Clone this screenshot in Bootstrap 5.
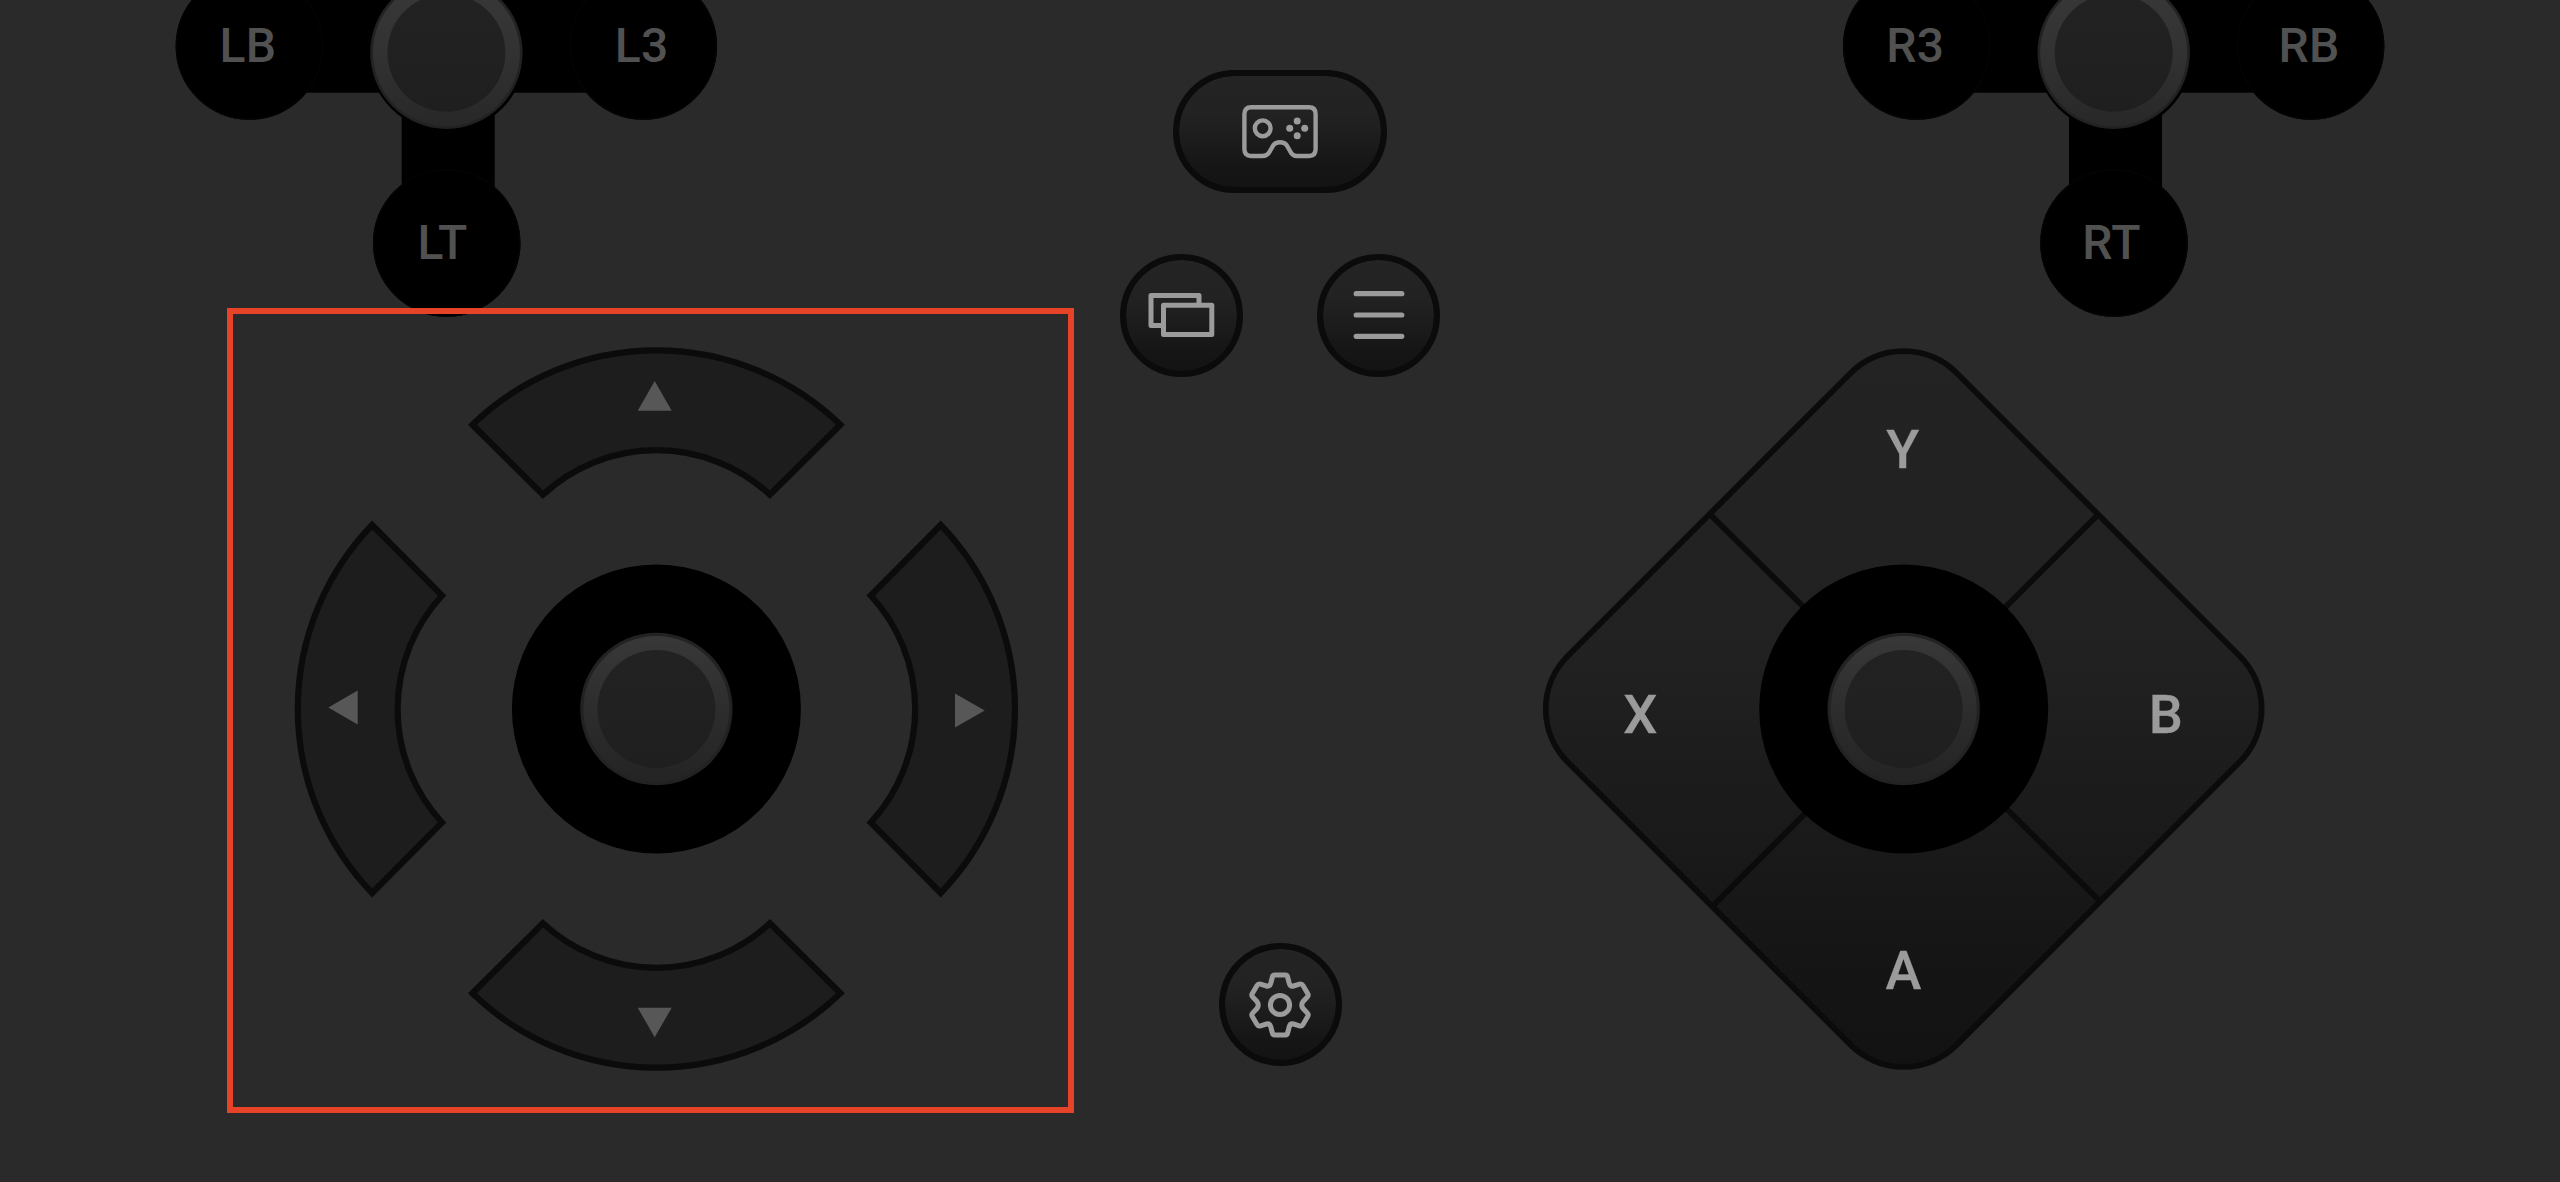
<!DOCTYPE html>
<html lang="en">
<head>
<meta charset="utf-8">
<meta name="viewport" content="width=device-width, initial-scale=1">
<title>Touch controller layout</title>
<link href="https://cdn.jsdelivr.net/npm/bootstrap@5.3.0/dist/css/bootstrap.min.css" rel="stylesheet">
<style>
  body { background: #2a2a2a; font-family: Roboto, "Liberation Sans", sans-serif; }
  .side-zone { width: 1100px; }
  .mid-zone { width: 360px; padding-top: 69.5px; }
  svg { display: block; overflow: visible; }
  .shoulder-art { width: 1100px; height: 308px; }
  .pad-frame { width: 847px; height: 805px; margin-left: 227px; border: 6px solid #e64329; }
  .pad-frame svg { width: 835px; height: 793px; }
  .face-art { width: 1100px; height: 805px; }
  .pad-btn { width: 123px; height: 123px; padding: 0; border: 6px solid #0b0b0b; background: linear-gradient(#242424 0%, #222 35%, #161616 80%, #131313 100%) padding-box, #0b0b0b; color: #9b9b9b; }
  .pad-btn.wide-btn { width: 214px; padding-top: 2px; }
  .pair-row { margin-top: 61px; gap: 74px; }
  .gear-btn { margin-top: 566.5px; }
  .shoulder-label { font-size: 48px; font-weight: 500; fill: #515151; letter-spacing: .4px; }
  .face-label { font-size: 54px; font-weight: 500; fill: #9b9b9c; stroke: #9b9b9c; stroke-width: .3; }
  .arc-key { fill: #1d1d1d; stroke: #0b0b0b; stroke-width: 6.2; }
  .arrow-mark { fill: #575757; }
</style>
</head>
<body class="overflow-hidden">
<!-- shared knob -->
<svg width="0" height="0" class="position-absolute" aria-hidden="true">
  <defs>
    <linearGradient id="rim" x1="0" y1="0" x2="0" y2="1">
      <stop offset="0" stop-color="#383838"/><stop offset=".5" stop-color="#2d2d2d"/><stop offset="1" stop-color="#242424"/>
    </linearGradient>
    <linearGradient id="rimHigh" x1="0" y1="0" x2="0" y2="1">
      <stop offset="0" stop-color="#383838"/><stop offset=".5" stop-color="#323232"/><stop offset="1" stop-color="#282828"/>
    </linearGradient>
    <linearGradient id="cap" x1="0" y1="0" x2="0" y2="1">
      <stop offset="0" stop-color="#222"/><stop offset="1" stop-color="#1f1f1f"/>
    </linearGradient>
    <linearGradient id="face" gradientUnits="userSpaceOnUse" x1="0" y1="-358" x2="0" y2="358">
      <stop offset="0" stop-color="#232323"/><stop offset=".42" stop-color="#212121"/><stop offset=".85" stop-color="#151515"/><stop offset="1" stop-color="#121212"/>
    </linearGradient>
    <g id="knob">
      <circle r="76.2" fill="#222"/>
      <circle r="73" fill="url(#rim)"/>
      <circle r="59" fill="url(#cap)"/>
    </g>
    <g id="cross">
      <rect x="-197" y="-40" width="394" height="132.7"/>
      <rect x="-45" y="0" width="93" height="220"/>
      <circle cx="-197.3" cy="46" r="73.8"/>
      <circle cx="196.6" cy="46" r="73.8"/>
      <circle cy="243" r="73.8"/>
      <g fill="none" stroke="#040404" stroke-width="1.5">
        <circle cx="-197.3" cy="46" r="73"/><circle cx="196.6" cy="46" r="73"/><circle cy="243" r="73"/>
      </g>
      <circle cy="53" r="78.5"/>
      <g transform="translate(-.3 52.7)">
        <circle r="76.2" fill="#222"/>
        <circle r="73.5" fill="url(#rimHigh)"/>
        <circle r="59" fill="url(#cap)"/>
      </g>
    </g>
    <path id="arc" d="M-184-284.3A265 265 0 0 1 184-284.3L113.5-214.3A167 167 0 0 0-113.5-214.3Z"/>
  </defs>
</svg>

<main class="d-flex vh-100">
  <section class="side-zone flex-shrink-0">
    <svg class="shoulder-art" viewBox="0 0 1100 308">
      <use href="#cross" x="446.7"/>
      <g class="shoulder-label">
        <text x="219.5" y="62.3">LB</text>
        <text x="614.7" y="62.3">L3</text>
        <text x="417.6" y="259.3">LT</text>
      </g>
    </svg>
    <div class="pad-frame position-relative">
      <svg viewBox="233 314 835 793">
        <g transform="translate(656.4 709)">
          <use href="#arc" class="arc-key"/>
          <use href="#arc" class="arc-key" transform="rotate(90)"/>
          <use href="#arc" class="arc-key" transform="rotate(180)"/>
          <use href="#arc" class="arc-key" transform="rotate(270)"/>
          <circle r="144.5"/>
          <use href="#knob"/>
        </g>
        <g class="arrow-mark">
          <path d="M654.7 381L671.7 410.7H637.7Z"/>
          <path d="M328.3 707.5L357.7 690.5V724.5Z"/>
          <path d="M984.7 710.5L955 693.5V727.5Z"/>
          <path d="M654.7 1037.3L671.7 1007.7H637.7Z"/>
        </g>
      </svg>
    </div>
  </section>

  <section class="mid-zone flex-shrink-0 d-flex flex-column align-items-center">
    <button class="btn pad-btn wide-btn rounded-pill d-flex align-items-center justify-content-center" aria-label="Controller">
      <svg width="76" height="54" viewBox="0 0 76 54" fill="none" stroke="currentColor" stroke-width="4.4">
        <path d="M9 2.3H67Q73.6 2.3 73.6 9V44Q73.6 51 67 51H55Q50.5 51 48.3 46.5L44.5 40Q42.5 37.2 38 37.2T31.5 40L27.7 46.5Q25.5 51 20 51H9Q2.4 51 2.4 44V9Q2.4 2.3 9 2.3Z"/>
        <circle cx="20.7" cy="23.3" r="7.9"/>
        <g fill="currentColor" stroke="none"><circle cx="55.2" cy="16" r="3.5"/><circle cx="55.2" cy="30.7" r="3.5"/><circle cx="47.7" cy="23.3" r="3.5"/><circle cx="62.7" cy="23.3" r="3.5"/></g>
      </svg>
    </button>
    <div class="pair-row d-flex">
      <button class="btn pad-btn rounded-circle d-flex align-items-center justify-content-center" aria-label="View">
        <svg width="66" height="44" viewBox=".5 0 66 44" fill="none" stroke="currentColor" stroke-width="5" stroke-linejoin="round">
          <path d="M15 32.5H2.5V2.5H50.5V12.5"/><rect x="15" y="12.3" width="48.3" height="29.2"/>
        </svg>
      </button>
      <button class="btn pad-btn rounded-circle d-flex align-items-center justify-content-center" aria-label="Menu">
        <svg width="52" height="48" viewBox="0 0 52 48" stroke="currentColor" stroke-width="5.2" stroke-linecap="round"><path d="M3.2 2.7H48.8M3.2 24H48.8M3.2 45.3H48.8"/></svg>
      </button>
    </div>
    <button class="btn pad-btn gear-btn rounded-circle d-flex align-items-center justify-content-center" aria-label="Settings">
      <svg width="66" height="66" viewBox="-33 -33 66 66" fill="none" stroke="currentColor" stroke-width="5" stroke-linejoin="round">
        <circle r="9.6"/>
        <path d="M-5.5-30H5.5Q7.2-30 7.6-28L9.3-21.5Q10.3-18.2 13.5-19L19.5-20.8Q21.8-21.5 23-19.5L27.8-11.3Q28.8-9.5 27.3-8L23.3-3.8Q20.2 0 23.3 3.8L27.3 8Q28.8 9.5 27.8 11.3L23 19.5Q21.8 21.5 19.5 20.8L13.5 19Q10.3 18.2 9.3 21.5L7.6 28Q7.2 30 5.5 30H-5.5Q-7.2 30-7.6 28L-9.3 21.5Q-10.3 18.2-13.5 19L-19.5 20.8Q-21.8 21.5-23 19.5L-27.8 11.3Q-28.8 9.5-27.3 8L-23.3 3.8Q-20.2 0-23.3-3.8L-27.3-8Q-28.8-9.5-27.8-11.3L-23-19.5Q-21.8-21.5-19.5-20.8L-13.5-19Q-10.3-18.2-9.3-21.5L-7.6-28Q-7.2-30-5.5-30Z"/>
      </svg>
    </button>
  </section>

  <section class="side-zone flex-shrink-0">
    <svg class="shoulder-art" viewBox="1460 0 1100 308">
      <use href="#cross" x="2114"/>
      <g class="shoulder-label">
        <text x="1886.2" y="62.3">R3</text>
        <text x="2278.4" y="62.3">RB</text>
        <text x="2082.3" y="259.3">RT</text>
      </g>
    </svg>
    <svg class="face-art" viewBox="1460 308 1100 805">
      <g transform="translate(1903.7 709)" stroke="#0b0b0b" stroke-width="5.8">
        <path fill="url(#face)" d="M-53-336A75 75 0 0 1 53-336L336-53A75 75 0 0 1 336 53L53 336A75 75 0 0 1-53 336L-336 53A75 75 0 0 1-336-53Z"/>
        <path d="M-194-195L-95-97M194.5-194.5L97-97M-190.5 196.5L-94 100M196 192L97 94"/>
        <circle r="144.5" stroke="none"/>
        <use href="#knob" stroke="none"/>
      </g>
      <g class="face-label" text-anchor="middle">
        <text x="1902.7" y="467.5">Y</text>
        <text x="1640.2" y="733">X</text>
        <text x="2165.7" y="733">B</text>
        <text x="1903.5" y="989.4">A</text>
      </g>
    </svg>
  </section>
</main>
<script src="https://cdn.jsdelivr.net/npm/bootstrap@5.3.0/dist/js/bootstrap.bundle.min.js"></script>
</body>
</html>
